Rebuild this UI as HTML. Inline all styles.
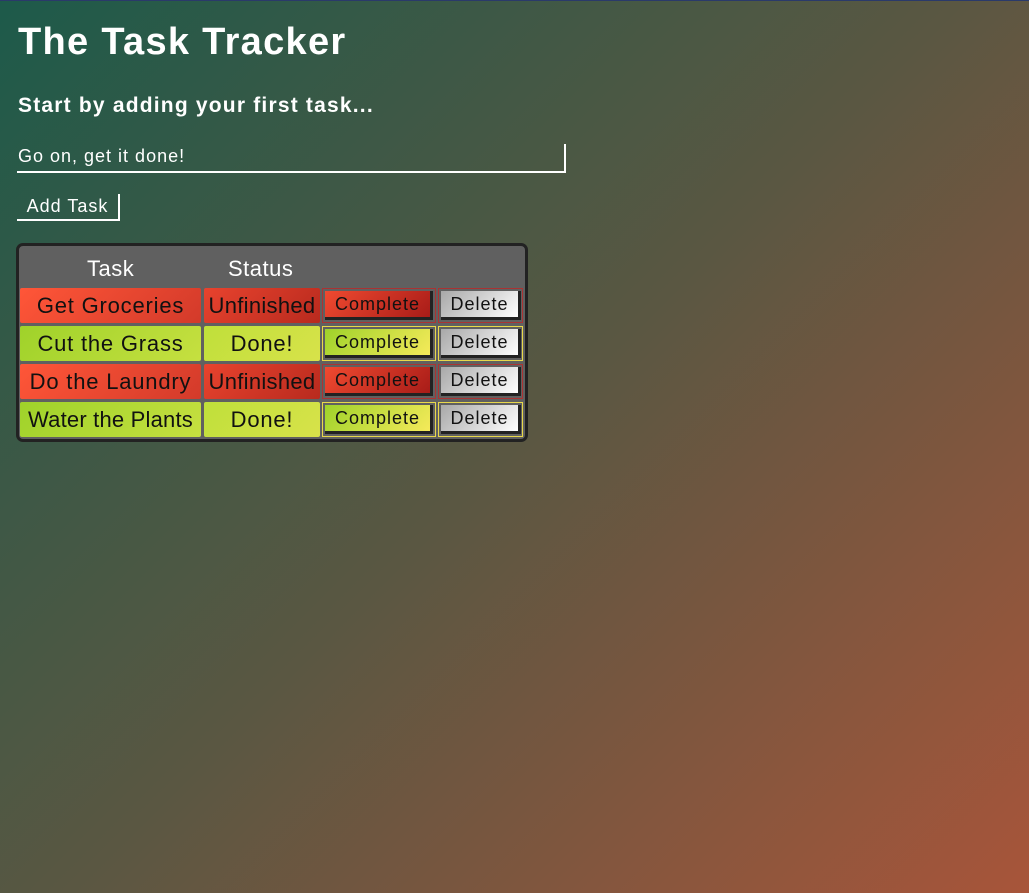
<!DOCTYPE html>
<html><head><style>
html,body{margin:0;padding:0;width:1029px;height:893px;overflow:hidden}
body{background:linear-gradient(135deg,#1d5a4a 0%,#5a5742 50%,#a8553a 100%);font-family:"Liberation Sans",Arial,sans-serif;color:#fff;position:relative;border-top:1px solid #2a3a6a;box-sizing:border-box}
.a{position:absolute;white-space:nowrap}
h1{position:absolute;left:18px;top:20px;margin:0;font-size:38px;font-weight:bold;letter-spacing:1.3px}
h2{position:absolute;left:18px;top:93px;margin:0;font-size:21px;font-weight:bold;letter-spacing:1.2px}
.inp{position:absolute;left:17px;top:143px;width:546px;height:27px;border-right:2px solid #fff;border-bottom:2px solid #fff;font-size:18px;line-height:24px;padding-left:1px;letter-spacing:1px}
.btn{position:absolute;left:17px;top:193px;width:101px;height:25px;border-right:2px solid #fff;border-bottom:2px solid #fff;font-size:18px;line-height:24px;text-align:center;letter-spacing:1px}
.tbl{position:absolute;left:16px;top:242px;width:506px;height:193px;border:3px solid #222;border-radius:7px;background:#606060}
.c{position:absolute;height:35px;line-height:35px;text-align:center;font-size:22px;color:#111;border-radius:2px;letter-spacing:0.8px;white-space:nowrap}
.r{background:linear-gradient(135deg,#ff5638,#d33a2a)}
.s{background:linear-gradient(135deg,#e8432e,#b82a1e)}
.g{background:linear-gradient(135deg,#9fd22a,#c6e040)}
.gs{background:linear-gradient(135deg,#bfe03a,#d8e24a)}
.cb{position:absolute;width:114px;height:35px;box-sizing:border-box;border:1px solid #a33;}
.cb div{position:absolute;left:2px;top:2px;width:105px;height:26px;border-right:3px solid #222;border-bottom:3px solid #222;text-align:center;font-size:18px;line-height:27px;color:#111;letter-spacing:1px}
.db{position:absolute;width:85px;height:35px;box-sizing:border-box;border:1px solid #a33}
.db div{position:absolute;left:2px;top:2px;width:77px;height:26px;border-right:3px solid #222;border-bottom:3px solid #222;text-align:center;font-size:18px;line-height:27px;color:#111;background:linear-gradient(135deg,#a8a8a8,#fff);letter-spacing:1px}
.y{border-color:#e8d84a}
.cr{background:linear-gradient(135deg,#f04a30,#a81c18)}
.cg{background:linear-gradient(135deg,#9ed22a,#f5ea5a)}
</style></head><body>
<h1>The Task Tracker</h1>
<h2>Start by adding your first task...</h2>
<div class="inp">Go on, get it done!</div>
<div class="btn">Add Task</div>
<div class="tbl"></div>
<div class="a" style="left:87px;top:255px;font-size:22px;letter-spacing:0.5px">Task</div>
<div class="a" style="left:228px;top:255px;font-size:22px;letter-spacing:0.5px">Status</div>

<div class="c r" style="left:20px;top:287px;width:181px">Get Groceries</div>
<div class="c s" style="left:204px;top:287px;width:116px;letter-spacing:0.3px">Unfinished</div>
<div class="cb" style="left:322px;top:287px"><div class="cr">Complete</div></div>
<div class="db" style="left:438px;top:287px"><div>Delete</div></div>

<div class="c g" style="left:20px;top:325px;width:181px">Cut the Grass</div>
<div class="c gs" style="left:204px;top:325px;width:116px">Done!</div>
<div class="cb y" style="left:322px;top:325px"><div class="cg">Complete</div></div>
<div class="db y" style="left:438px;top:325px"><div>Delete</div></div>

<div class="c r" style="left:20px;top:363px;width:181px">Do the Laundry</div>
<div class="c s" style="left:204px;top:363px;width:116px;letter-spacing:0.3px">Unfinished</div>
<div class="cb" style="left:322px;top:363px"><div class="cr">Complete</div></div>
<div class="db" style="left:438px;top:363px"><div>Delete</div></div>

<div class="c g" style="left:20px;top:401px;width:181px;letter-spacing:0.2px">Water the Plants</div>
<div class="c gs" style="left:204px;top:401px;width:116px">Done!</div>
<div class="cb y" style="left:322px;top:401px"><div class="cg">Complete</div></div>
<div class="db y" style="left:438px;top:401px"><div>Delete</div></div>
</body></html>
